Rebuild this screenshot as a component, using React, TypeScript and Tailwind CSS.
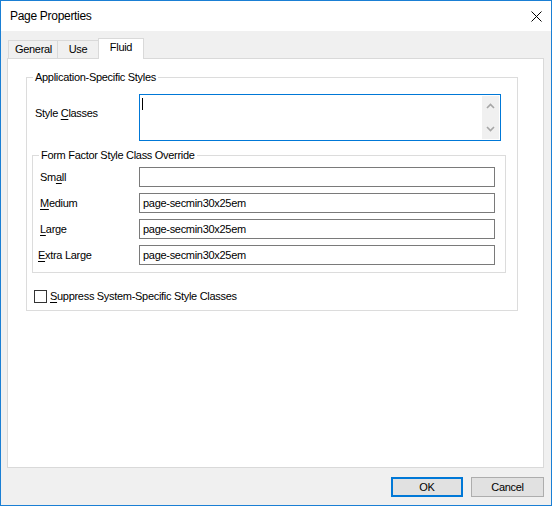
import type { ReactNode } from "react"

function U({ children }: { children: ReactNode }) {
  return <span className="underline underline-offset-[2px]">{children}</span>
}

function Chevron({ up }: { up?: boolean }) {
  return (
    <svg width="9" height="6" viewBox="0 0 9 6" className="block">
      <polyline
        points={up ? "1,5 4.5,1.5 8,5" : "1,1 4.5,4.5 8,1"}
        fill="none"
        stroke="#a6a6a6"
        strokeWidth="1.6"
      />
    </svg>
  )
}

const sizes: { label: ReactNode; value: string; shift?: boolean }[] = [
  { label: <>Sm<U>a</U>ll</>, value: "" },
  { label: <><U>M</U>edium</>, value: "page-secmin30x25em" },
  { label: <><U>L</U>arge</>, value: "page-secmin30x25em" },
  { label: <><U>E</U>xtra Large</>, value: "page-secmin30x25em", shift: true },
]

export default function App() {
  return (
    <div className="flex h-[506px] w-[552px] flex-col border border-[#1a7fd4] bg-[#f0f0f0] font-['Liberation_Sans',Arial,sans-serif] text-[11px] tracking-[-0.3px] text-black">
      {/* title bar */}
      <div className="flex h-[30px] items-center justify-between bg-white pl-[9px] pr-[9px]">
        <span className="text-[12px]">Page Properties</span>
        <svg width="11" height="11" viewBox="0 0 11 11">
          <path d="M0.5 0.5 L10.5 10.5 M10.5 0.5 L0.5 10.5" stroke="#000" strokeWidth="1" />
        </svg>
      </div>

      <div className="flex flex-1 flex-col pl-[6px] pr-[7px] pt-[7px]">
        {/* tabs */}
        <div className="ml-[1px] flex h-[20px] items-end">
          <div className="flex h-[18px] w-[49px] items-center justify-center border-l border-t border-[#d9d9d9] pl-px">
            General
          </div>
          <div className="flex h-[18px] w-[41px] items-center justify-center border-l border-t border-[#d9d9d9]">
            Use
          </div>
          <div className="relative z-10 -mb-px flex h-[21px] w-[46px] items-center justify-center border-l border-r border-t border-[#d9d9d9] bg-white pb-[3px]">
            Fluid
          </div>
        </div>

        {/* panel */}
        <div className="h-[410px] border border-[#d9d9d9] bg-white pt-[11px]">
          <fieldset className="ml-[18px] w-[492px] border border-[#dcdcdc] pb-[5px]">
            <legend className="ml-[6px] px-[2px] leading-[14px]">Application-Specific Styles</legend>

            <div className="mt-[10px] flex pl-[8px]">
              <div className="w-[104px] pt-[11px]">
                Style <U>C</U>lasses
              </div>
              <div className="flex h-[47px] w-[362px] border border-[#0078d7] bg-white">
                <div className="flex-1 pl-[2px] pt-[3px]">
                  <div className="h-[12px] w-px bg-black" />
                </div>
                <div className="my-px mr-px flex w-[17px] flex-col items-center justify-between bg-[#f0f0f0] py-[7px]">
                  <Chevron up />
                  <Chevron />
                </div>
              </div>
            </div>

            <fieldset className="ml-[5px] mt-[7px] w-[474px] border border-[#dcdcdc] pb-[7px]">
              <legend className="ml-[6px] px-[2px] leading-[14px]">Form Factor Style Class Override</legend>
              <div className="mt-[5px] flex flex-col gap-[6px] pl-[7px]">
                {sizes.map((s, i) => (
                  <div key={i} className="flex items-center">
                    <div className={s.shift ? "-ml-[2px] w-[101px]" : "w-[99px]"}>{s.label}</div>
                    <div className="flex h-[20px] w-[356px] items-center border border-[#7a7a7a] bg-white pl-[3px]">
                      {s.value}
                    </div>
                  </div>
                ))}
              </div>
            </fieldset>

            <div className="mt-[15px] flex items-center gap-[3px] pl-[7px]">
              <div className="h-[13px] w-[13px] border border-[#333] bg-white" />
              <span>
                <U>S</U>uppress System-Specific Style Classes
              </span>
            </div>
          </fieldset>
        </div>

        {/* buttons */}
        <div className="mt-[9px] flex justify-end gap-[8px]">
          <button className="flex h-[20px] w-[72px] items-center justify-center border-2 border-[#0078d7] bg-[#e1e1e1]">
            OK
          </button>
          <button className="flex h-[20px] w-[73px] items-center justify-center border border-[#adadad] bg-[#e1e1e1]">
            Cancel
          </button>
        </div>
      </div>
    </div>
  )
}
